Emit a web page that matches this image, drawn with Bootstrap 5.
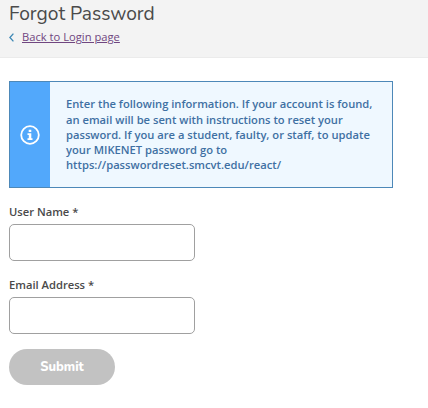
<!DOCTYPE html>
<html lang="en">
<head>
<meta charset="utf-8">
<meta name="viewport" content="width=device-width, initial-scale=1">
<title>Forgot Password</title>
<link href="https://cdn.jsdelivr.net/npm/bootstrap@5.3.0/dist/css/bootstrap.min.css" rel="stylesheet">
<style>
body{font-family:"Open Sans",sans-serif;font-size:11.2px;line-height:15px;color:#444;background:#fff;overflow:hidden}
.page-head{background:#f3f3f3;border-bottom:1px solid #ebebeb;height:58px;padding:2px 9px 0}
.page-title{font-family:"Nunito","Open Sans",sans-serif;font-size:19.2px;line-height:24px;color:#4a4a4a;font-weight:400}
.back-link{color:#704680;font-size:11.2px;line-height:16px}
.back-link:hover{color:#4b2a63}
.back-row{margin-top:3px}
.page-body{padding:23px 9px 0;width:402px}
.notice{width:384px;height:107px;border:1px solid #4d88b8;background:#eff8ff;color:#3f70a3}
.notice-icon{width:40px;background:#52a8fb}
.notice-text{font-size:11.2px;font-weight:600;line-height:15.2px;padding-left:16px}
.field-label{font-size:11.2px;font-weight:600;line-height:16px;color:#4a4a4a;margin-bottom:4px}
.field-input{width:186px;height:37px;border:1px solid #a0a0a0;border-radius:5px}
.field-first{margin-top:16px}
.field-next{margin-top:16px}
.submit-btn,.submit-btn:hover{width:106px;height:36px;margin-top:15px;background:#c2c2c2;color:#fff;font-family:"Nunito","Open Sans",sans-serif;font-size:12.8px;line-height:16px;font-weight:800}
</style>
</head>
<body>
<header class="page-head">
<h1 class="page-title mb-0">Forgot Password</h1>
<div class="back-row d-flex align-items-center"><svg class="me-2" width="5" height="9" viewBox="0 0 5 9" fill="none" stroke="#3d88b5" stroke-width="1.3"><path d="M4.4.6.9 4.5l3.5 3.9"/></svg><a class="back-link" href="#">Back to Login page</a></div>
</header>
<main class="page-body">
<div class="notice d-flex" role="alert">
<div class="notice-icon d-flex align-items-center justify-content-center flex-shrink-0"><svg width="20" height="20" viewBox="0 0 20 20" aria-hidden="true"><circle cx="10" cy="10" r="8.8" fill="none" stroke="#fff" stroke-width="1.8"/><path fill="#fff" d="M8.7 4.8h2.6v2.3H8.7zM7.5 8.2h3.8v5h1.2v1.7h-5v-1.7h1.3V9.9H7.5z"/></svg></div>
<div class="notice-text align-self-center text-nowrap">Enter the following information. If your account is found,<br>an email will be sent with instructions to reset your<br>password. If you are a student, faulty, or staff, to update<br>your MIKENET password go to<br>https://passwordreset.smcvt.edu/react/</div>
</div>
<form>
<div class="field-first">
<label class="field-label d-block" for="username">User Name *</label>
<input class="field-input form-control" id="username" type="text">
</div>
<div class="field-next">
<label class="field-label d-block" for="email">Email Address *</label>
<input class="field-input form-control" id="email" type="email">
</div>
<button class="submit-btn btn rounded-pill border-0 p-0 d-block" type="button">Submit</button>
</form>
</main>
<script src="https://cdn.jsdelivr.net/npm/bootstrap@5.3.0/dist/js/bootstrap.bundle.min.js"></script>
</body>
</html>
